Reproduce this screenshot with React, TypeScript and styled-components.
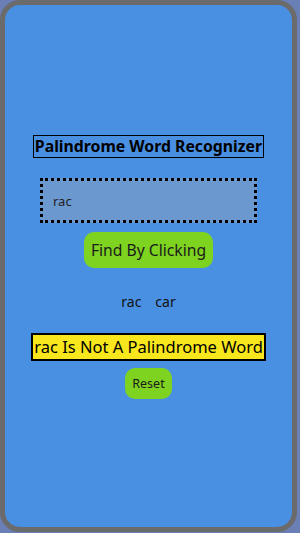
import React, { useState } from "react";
import styled, { createGlobalStyle } from "styled-components";

const Global = createGlobalStyle`
  html, body { margin: 0; padding: 0; background: #6a7fb6; }
  body { font-family: "Noto Sans", "Open Sans", sans-serif; }
`;

const Frame = styled.div`
  box-sizing: border-box;
  width: 297px;
  height: 532px;
  border: 5px solid #6b6b6b;
  border-radius: 20px;
  background: #4a90e2;
  display: flex;
  flex-direction: column;
  align-items: center;
  padding-top: 130px;
`;

const Title = styled.h1`
  margin: 0;
  font-size: 15.8px;
  font-weight: 700;
  color: #000;
  border: 1px solid #000;
  padding: 0 1px;
  line-height: 21px;
`;

const Input = styled.input`
  box-sizing: border-box;
  margin-top: 20px;
  width: 217px;
  height: 45px;
  border: 3px dotted #000;
  background: #6b98cf;
  padding: 0 10px;
  font-family: inherit;
  font-size: 13px;
  color: #222;
  outline: none;
`;

const GreenButton = styled.button<{ $big?: boolean }>`
  margin-top: ${(p) => (p.$big ? 9 : 7)}px;
  border: none;
  background: #7ed321;
  color: #1a1a1a;
  border-radius: 10px;
  font-family: inherit;
  font-size: ${(p) => (p.$big ? 15.7 : 12.5)}px;
  height: ${(p) => (p.$big ? 36 : 31)}px;
  padding: 0 7px;
  cursor: pointer;
`;

const Words = styled.div`
  margin-top: 24px;
  display: flex;
  gap: 14px;
  font-size: 14px;
  color: #111;
  line-height: 20px;
`;

const Result = styled.div`
  margin-top: 21px;
  background: #f8e71c;
  border: 2px solid #000;
  font-size: 16.5px;
  line-height: 24px;
  color: #000;
  padding: 0 1px;
`;

export default function App() {
  const [word, setWord] = useState("rac");
  const reversed = word.split("").reverse().join("");
  return (
    <>
      <Global />
      <Frame>
        <Title>Palindrome Word Recognizer</Title>
        <Input value={word} onChange={(e) => setWord(e.target.value)} />
        <GreenButton $big>Find By Clicking</GreenButton>
        <Words>
          <span>{word}</span>
          <span>{reversed}</span>
        </Words>
        <Result>
          {word} Is {word === reversed ? "" : "Not "}A Palindrome Word
        </Result>
        <GreenButton onClick={() => setWord("")}>Reset</GreenButton>
      </Frame>
    </>
  );
}
